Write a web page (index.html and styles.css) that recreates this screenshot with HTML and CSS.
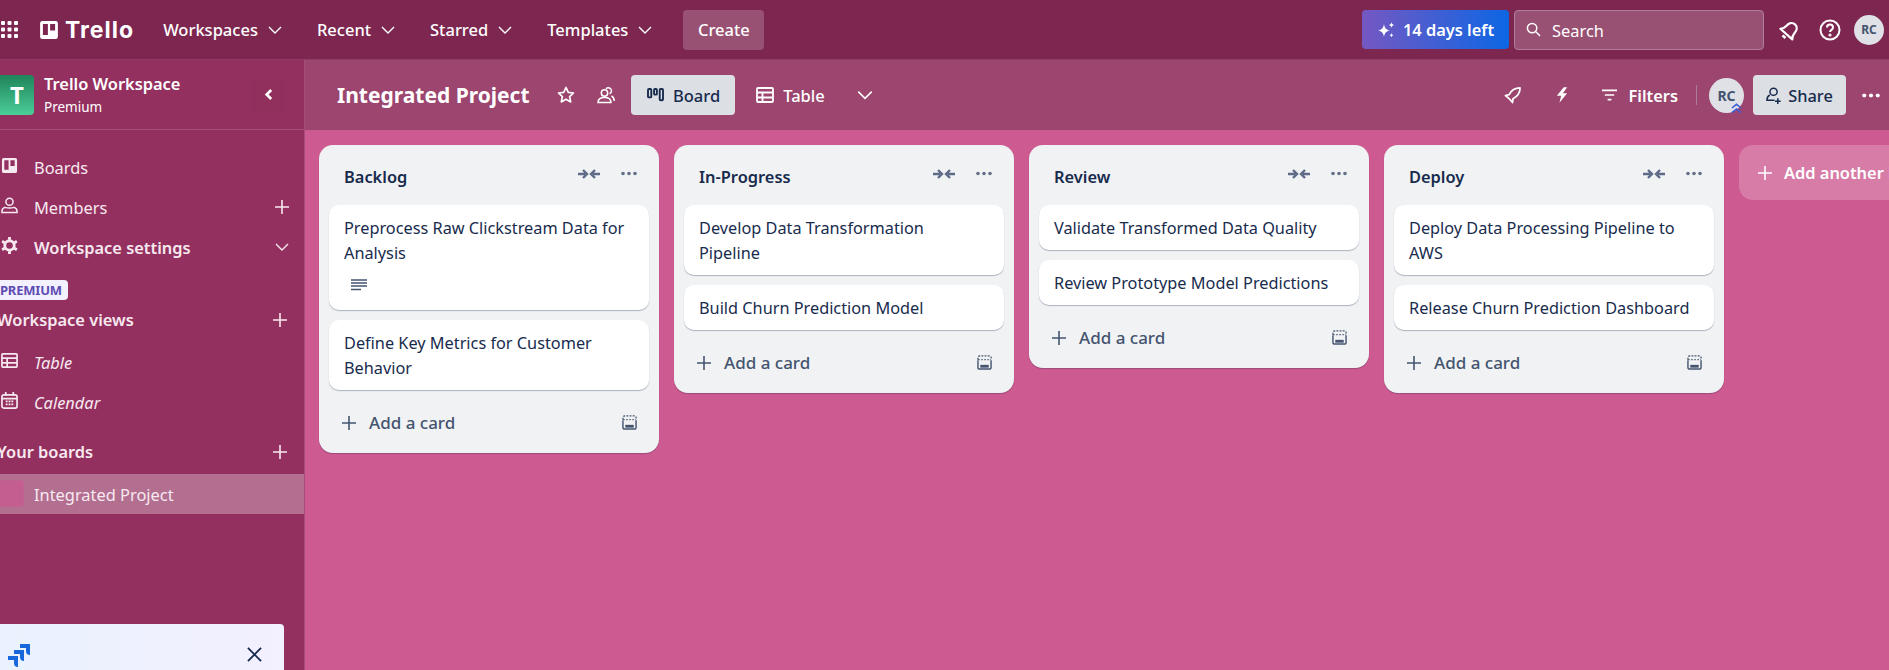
FILE: index.html
```html
<!DOCTYPE html>
<html lang="en">

<head>
    <meta charset="UTF-8">
    <title>Integrated Project | Trello</title>
    <link rel="stylesheet" href="styles.css">
</head>

<body>
    <svg class="defs" width="0" height="0">
        <symbol id="chev" viewBox="0 0 16 16"><path d="M2 5l6 6 6-6" fill="none" stroke="currentColor" stroke-width="1.400"/></symbol>
        <symbol id="plus" viewBox="0 0 16 16"><path d="M8 1v14M1 8h14" fill="none" stroke="currentColor" stroke-width="1.600"/></symbol>
        <symbol id="collapse" viewBox="0 0 22 10"><path d="M0 5h7M5 1l4 4-4 4M22 5h-7M17 1l-4 4 4 4" fill="none" stroke="currentColor" stroke-width="2.400"/></symbol>
        <symbol id="dots" viewBox="0 0 16 4"><circle cx="2" cy="2" r="1.800" fill="currentColor"/><circle cx="8" cy="2" r="1.800" fill="currentColor"/><circle cx="14" cy="2" r="1.800" fill="currentColor"/></symbol>
        <symbol id="template" viewBox="0 0 16 16"><path d="M1 5V3q0-2 2-2h10q2 0 2 2v2" fill="none" stroke="currentColor" stroke-width="1.400" stroke-dasharray="2 1.300"/><path d="M1 5.500V13q0 2 2 2h10q2 0 2-2V5.500" fill="none" stroke="currentColor" stroke-width="1.500"/><path d="M1 5h14" stroke="currentColor" stroke-width="1" stroke-dasharray="2 1.300"/><rect x="3.500" y="10.500" width="9" height="3" fill="currentColor"/></symbol>
        <symbol id="board" viewBox="0 0 18 18"><path fill-rule="evenodd" d="M3 1h12q2 0 2 2v12q0 2-2 2H3q-2 0-2-2V3q0-2 2-2zM3.500 3.500v10h4.500v-10zM10 3.500v6h4.500v-6z" fill="currentColor"/></symbol>
        <symbol id="table" viewBox="0 0 18 16"><path d="M2 1h14q1 0 1 1v12q0 1-1 1H2q-1 0-1-1V2q0-1 1-1zM1 5.500h16M1 10.500h16M6.500 5.500V15" fill="none" stroke="currentColor" stroke-width="1.800"/></symbol>
    </svg>

    <header class="topbar">
        <svg class="apps" viewBox="0 0 17 17" width="17" height="17" fill="#fff">
            <rect width="4" height="4" rx="1"/><rect x="6.500" width="4" height="4" rx="1"/><rect x="13" width="4" height="4" rx="1"/>
            <rect y="6.500" width="4" height="4" rx="1"/><rect x="6.500" y="6.500" width="4" height="4" rx="1"/><rect x="13" y="6.500" width="4" height="4" rx="1"/>
            <rect y="13" width="4" height="4" rx="1"/><rect x="6.500" y="13" width="4" height="4" rx="1"/><rect x="13" y="13" width="4" height="4" rx="1"/>
        </svg>
        <div class="logo">
            <svg viewBox="0 0 18 18" width="20" height="20"><use href="#board"/></svg>
            <span>Trello</span>
        </div>
        <nav class="nav">
            <a class="nav-item">Workspaces <svg><use href="#chev"/></svg></a>
            <a class="nav-item">Recent <svg><use href="#chev"/></svg></a>
            <a class="nav-item">Starred <svg><use href="#chev"/></svg></a>
            <a class="nav-item">Templates <svg><use href="#chev"/></svg></a>
        </nav>
        <button class="create">Create</button>

        <div class="top-right">
            <button class="trial">
                <svg viewBox="0 0 18 18" width="18" height="18" fill="#fff"><path d="M7 3c.6 4 2 5.600 6 6.500-4 .9-5.400 2.500-6 6.500-.6-4-2-5.600-6-6.500 4-.9 5.400-2.500 6-6.500zM14.500 1c.3 1.800 1 2.500 2.500 3-1.500.5-2.200 1.200-2.500 3-.3-1.800-1-2.500-2.500-3 1.500-.5 2.200-1.200 2.500-3zM14.500 12c.2 1.300.7 1.800 2 2.200-1.300.4-1.800.9-2 2.300-.2-1.400-.7-1.900-2-2.300 1.300-.4 1.800-.9 2-2.200z"/></svg>
                14 days left
            </button>
            <div class="search">
                <svg viewBox="0 0 16 16" width="15" height="15" fill="none" stroke="#fff" stroke-width="1.600"><circle cx="6.500" cy="6.500" r="5"/><path d="M10.500 10.500l4.500 4.500"/></svg>
                <span>Search</span>
            </div>
            <svg class="top-icon" viewBox="0 0 24 24" width="24" height="24" fill="none" stroke="#fff" stroke-width="2.200" stroke-linejoin="round"><g transform="rotate(42 12 12)"><path d="M4 17.500c1.500-1.500 2.500-3 2.500-6 0-4 2-7 5.500-7s5.500 3 5.500 7c0 3 1 4.500 2.500 6z"/><path d="M10 21h4" stroke-width="2.600"/></g></svg>
            <svg class="top-icon" viewBox="0 0 22 22" width="22" height="22" fill="none" stroke="#fff" stroke-width="2"><circle cx="11" cy="11" r="9.500"/><path d="M8 8.500c0-4 6-4 6 0 0 2.500-3 2.300-3 4.500"/><circle cx="11" cy="16" r=".6"/></svg>
            <span class="avatar">RC</span>
        </div>
    </header>

    <div class="main">
        <aside class="sidebar">
            <div class="side-head">
                <span class="ws-badge">T</span>
                <div class="ws-name">
                    <b>Trello Workspace</b>
                    <small>Premium</small>
                </div>
                <span class="side-collapse">
                    <svg viewBox="0 0 10 14" width="9" height="13" fill="none" stroke="#fff" stroke-width="3"><path d="M8 2L3 7l5 5"/></svg>
                </span>
            </div>

            <ul class="side-list">
                <li class="side-row">
                    <svg class="side-icon" viewBox="0 0 18 18"><use href="#board"/></svg>
                    <span>Boards</span>
                </li>
                <li class="side-row">
                    <svg class="side-icon" viewBox="0 0 18 18" fill="none" stroke="currentColor" stroke-width="1.600"><circle cx="9" cy="5" r="3.800"/><path d="M4 11q-3 1-3 4v1.500h16V15q0-3-3-4-5 1.500-10 0z"/></svg>
                    <span>Members</span>
                    <svg class="side-plus"><use href="#plus"/></svg>
                </li>
                <li class="side-row strong">
                    <svg class="side-icon" viewBox="0 0 18 18" fill="none" stroke="currentColor"><circle cx="9" cy="9" r="5" stroke-width="3"/><path d="M9 0v3M9 15v3M1.200 4.500l2.600 1.500M14.200 12l2.600 1.500M1.200 13.500L3.800 12M14.200 6l2.600-1.500" stroke-width="3"/></svg>
                    <span>Workspace settings</span>
                    <svg class="side-chev"><use href="#chev"/></svg>
                </li>
            </ul>

            <div class="premium">PREMIUM</div>
            <div class="side-title first">
                <span>Workspace views</span>
                <svg><use href="#plus"/></svg>
            </div>
            <ul class="side-list">
                <li class="side-row view">
                    <svg class="side-icon" viewBox="0 0 18 16"><use href="#table"/></svg>
                    <span>Table</span>
                </li>
                <li class="side-row view">
                    <svg class="side-icon" viewBox="0 0 18 18" fill="none" stroke="currentColor" stroke-width="1.800"><rect x="1" y="3" width="16" height="14" rx="2"/><path d="M1 7h16M5 0v4M13 0v4M5 10h2M8 10h2M11 10h2M5 13h2M8 13h2M11 13h2"/></svg>
                    <span>Calendar</span>
                </li>
            </ul>

            <div class="side-title boards">
                <span>Your boards</span>
                <svg><use href="#plus"/></svg>
            </div>
            <div class="side-row current">
                <span class="thumb"></span>
                <span>Integrated Project</span>
            </div>

            <div class="promo">
                <svg class="jira" viewBox="0 0 24 24" width="24" height="24" fill="#1868db"><path d="M13 1h10v11q-4 0-4-4V5h-6zM7 7h10v11q-4 0-4-4v-3H7zM1 13h10v11q-4 0-4-4v-3H1z"/></svg>
                <svg class="promo-x" viewBox="0 0 16 16" width="15" height="15" fill="none" stroke="#172b4d" stroke-width="2"><path d="M1 1l14 14M15 1L1 15"/></svg>
            </div>
        </aside>

        <section class="board">
            <div class="board-bar">
                <h1>Integrated Project</h1>
                <svg class="bar-icon star" viewBox="0 0 18 18" width="18" height="18" fill="none" stroke="#fff" stroke-width="1.700" stroke-linejoin="round"><path d="M9 1.500l2.300 4.900 5.200.6-3.900 3.600 1.100 5.300L9 13.200l-4.700 2.700 1.100-5.300L1.500 7l5.200-.6z"/></svg>
                <svg class="bar-icon people" viewBox="0 0 18 18" width="18" height="18" fill="none" stroke="#fff" stroke-width="1.500"><circle cx="7.500" cy="7" r="3.200"/><path d="M1 16.500c0-3 2.500-5 6.500-5s6.500 2 6.500 5zM9 2.800a3.200 3.200 0 0 1 5.500 2.200 3 3 0 0 1-2 2.800M14.500 10c1.800 1 2.700 3 2.700 5"/></svg>
                <button class="view-btn active">
                    <svg viewBox="0 0 18 16" width="17" height="15" fill="none" stroke="currentColor" stroke-width="2"><rect x="1" y="1" width="3.500" height="9" rx="1"/><rect x="7.500" y="1" width="3" height="6" rx="1"/><rect x="13.500" y="1" width="3.500" height="12" rx="1"/></svg>
                    Board
                </button>
                <button class="view-btn">
                    <svg viewBox="0 0 18 16" width="18" height="16"><use href="#table"/></svg>
                    Table
                </button>
                <svg class="bar-chev"><use href="#chev"/></svg>

                <div class="bar-right">
                    <svg class="bar-tool" viewBox="0 0 18 18" width="17" height="17" fill="none" stroke="#fff" stroke-width="1.800" stroke-linejoin="round"><path d="M17 1c-5 0-9 2-11.500 7L1.500 9l3 2.500 2.500 2.500 2 2.500.5-4C14 10 17 6 17 1z"/></svg>
                    <svg class="bar-tool bolt" viewBox="0 0 14 18" width="12" height="16" fill="#fff"><path d="M9 0L1 10h5l-2 8 9-11H8l5-7z"/></svg>
                    <div class="filters">
                        <svg viewBox="0 0 16 12" width="15" height="12" fill="none" stroke="#fff" stroke-width="1.800"><path d="M0 1h16M3 6h10M6 11h4"/></svg>
                        <span>Filters</span>
                    </div>
                    <span class="bar-sep"></span>
                    <span class="avatar big">RC
                        <svg class="chevs" viewBox="0 0 12 12" width="11" height="12" fill="none" stroke="#3d5bd8" stroke-width="1.700"><path d="M1 6l5-4 5 4M1 11l5-4 5 4"/></svg>
                    </span>
                    <button class="share">
                        <svg viewBox="0 0 18 18" width="17" height="17" fill="none" stroke="#172b4d" stroke-width="1.600"><circle cx="8" cy="5" r="3.800"/><path d="M9 14H1c0-3 1-4.500 3-5.500M12.500 12v6M9.500 15h6"/></svg>
                        Share
                    </button>
                    <svg class="bar-dots" viewBox="0 0 16 4"><use href="#dots"/></svg>
                </div>
            </div>

            <div class="lists">
                <div class="list">
                    <div class="list-head">
                        <h2>Backlog</h2>
                        <svg class="ico-collapse"><use href="#collapse"/></svg>
                        <svg class="ico-dots"><use href="#dots"/></svg>
                    </div>
                    <div class="card">
                        Preprocess Raw Clickstream Data for Analysis
                        <svg class="desc" viewBox="0 0 16 12" width="16" height="12" fill="none" stroke="#44546f" stroke-width="1.400"><path d="M0 1h16M0 4h16M0 7h16M0 10.500h10"/></svg>
                    </div>
                    <div class="card">Define Key Metrics for Customer Behavior</div>
                    <div class="list-foot">
                        <svg class="foot-plus"><use href="#plus"/></svg>
                        <span>Add a card</span>
                        <svg class="foot-tpl"><use href="#template"/></svg>
                    </div>
                </div>

                <div class="list">
                    <div class="list-head">
                        <h2>In-Progress</h2>
                        <svg class="ico-collapse"><use href="#collapse"/></svg>
                        <svg class="ico-dots"><use href="#dots"/></svg>
                    </div>
                    <div class="card">Develop Data Transformation Pipeline</div>
                    <div class="card">Build Churn Prediction Model</div>
                    <div class="list-foot">
                        <svg class="foot-plus"><use href="#plus"/></svg>
                        <span>Add a card</span>
                        <svg class="foot-tpl"><use href="#template"/></svg>
                    </div>
                </div>

                <div class="list">
                    <div class="list-head">
                        <h2>Review</h2>
                        <svg class="ico-collapse"><use href="#collapse"/></svg>
                        <svg class="ico-dots"><use href="#dots"/></svg>
                    </div>
                    <div class="card">Validate Transformed Data Quality</div>
                    <div class="card">Review Prototype Model Predictions</div>
                    <div class="list-foot">
                        <svg class="foot-plus"><use href="#plus"/></svg>
                        <span>Add a card</span>
                        <svg class="foot-tpl"><use href="#template"/></svg>
                    </div>
                </div>

                <div class="list">
                    <div class="list-head">
                        <h2>Deploy</h2>
                        <svg class="ico-collapse"><use href="#collapse"/></svg>
                        <svg class="ico-dots"><use href="#dots"/></svg>
                    </div>
                    <div class="card">Deploy Data Processing Pipeline to AWS</div>
                    <div class="card">Release Churn Prediction Dashboard</div>
                    <div class="list-foot">
                        <svg class="foot-plus"><use href="#plus"/></svg>
                        <span>Add a card</span>
                        <svg class="foot-tpl"><use href="#template"/></svg>
                    </div>
                </div>

                <button class="add-list">
                    <svg><use href="#plus"/></svg>
                    Add another list
                </button>
            </div>
        </section>
    </div>
</body>

</html>
```

FILE: styles.css
```css
* {
    margin: 0;
    padding: 0;
    box-sizing: border-box;
}

body {
    width: 1889px;
    height: 670px;
    overflow: hidden;
    display: flex;
    flex-direction: column;
    background: #cd5a91;
    color: #fff;
    font-family: "Noto Sans", "Open Sans", sans-serif;
    font-size: 16.4px;
}

button {
    border: 0;
    font: inherit;
}

ul {
    list-style: none;
}

.defs {
    position: absolute;
}

/* Top bar */
.topbar {
    height: 60px;
    flex: none;
    display: flex;
    align-items: center;
    padding-left: 1px;
    background: #7d2650;
    border-bottom: 1px solid #8f3c64;
}

.logo {
    display: flex;
    align-items: center;
    gap: 6px;
    margin-left: 21px;
    font-family: "Inter", sans-serif;
    font-size: 23px;
    font-weight: 700;
    letter-spacing: 1px;
}

.logo svg {
    fill: #fff;
}

.nav {
    display: flex;
    margin-left: 29px;
}

.nav-item {
    display: flex;
    align-items: center;
    gap: 9px;
    font-size: 16.500px;
    font-weight: 500;
    margin-right: 34px;
}

.nav-item:last-child {
    margin-right: 30px;
}

.nav-item svg {
    width: 16px;
    height: 16px;
}

.create {
    width: 81px;
    height: 40px;
    border-radius: 4px;
    background: #985173;
    color: #fff;
    font-size: 16.500px;
    font-weight: 500;
}

.top-right {
    margin-left: auto;
    display: flex;
    align-items: center;
}

.trial {
    width: 147px;
    height: 39px;
    display: flex;
    align-items: center;
    justify-content: center;
    gap: 8px;
    border-radius: 4px;
    background: linear-gradient(90deg, #7558c2, #0c66e4);
    color: #fff;
    font-weight: 600;
}

.search {
    width: 250px;
    height: 40px;
    margin-left: 5px;
    display: flex;
    align-items: center;
    gap: 11px;
    padding-left: 11px;
    border: 1px solid #b07d96;
    border-radius: 4px;
    background: #985173;
}

.search span {
    padding-top: 2px;
}

.top-icon {
    margin-left: 14px;
}

.top-icon + .top-icon {
    margin-left: 17px;
}

.avatar {
    width: 30px;
    height: 30px;
    margin: 0 5px 0 13px;
    display: flex;
    align-items: center;
    justify-content: center;
    border-radius: 50%;
    background: #dfe1e6;
    color: #44546f;
    font-size: 12px;
    font-weight: 700;
}

/* Main area */
.main {
    flex: 1;
    display: grid;
    grid-template-columns: 305px 1fr;
    min-height: 0;
}

.sidebar {
    display: flex;
    flex-direction: column;
    position: relative;
    background: #94305f;
    border-right: 1px solid #a64d78;
    overflow: hidden;
}

.side-head {
    height: 70px;
    flex: none;
    display: flex;
    align-items: center;
    border-bottom: 1px solid #a64d78;
}

.ws-badge {
    width: 34px;
    height: 40px;
    display: flex;
    align-items: center;
    justify-content: center;
    border-radius: 0 4px 4px 0;
    background: linear-gradient(180deg, #1f845a, #4bce97);
    font-size: 24px;
    font-weight: 700;
}

.ws-name {
    display: flex;
    flex-direction: column;
    margin-left: 10px;
}

.ws-name b {
    font-size: 16.400px;
    font-weight: 600;
    line-height: 24px;
}

.ws-name small {
    font-size: 13.500px;
    line-height: 22px;
}

.side-collapse {
    width: 34px;
    height: 34px;
    margin-left: auto;
    margin-right: 19px;
    display: flex;
    align-items: center;
    justify-content: center;
    border-radius: 4px;
    background: #912f5d;
}

.side-list {
    display: flex;
    flex-direction: column;
}

.side-head + .side-list {
    margin-top: 17px;
}

.side-row {
    height: 40px;
    display: flex;
    align-items: center;
    padding-left: 34px;
    position: relative;
    color: #f7e9f0;
}

.side-row.strong {
    font-weight: 600;
}

.side-row.view {
    font-style: italic;
}

.side-icon {
    position: absolute;
    left: 1px;
    top: 10px;
    width: 17px;
    height: 17px;
}

.side-plus,
.side-chev,
.side-title svg {
    width: 16px;
    height: 16px;
}

.side-plus,
.side-chev {
    margin-left: auto;
    margin-right: 14px;
}

.premium {
    width: 68px;
    height: 20px;
    margin-top: 13px;
    display: flex;
    align-items: center;
    border-radius: 0 4px 4px 0;
    background: #f3f0ff;
    color: #5e4db2;
    font-size: 13px;
    font-weight: 700;
    letter-spacing: -0.2px;
}

.side-title {
    height: 40px;
    display: flex;
    align-items: center;
    justify-content: space-between;
    margin-left: -3px;
    padding-right: 16px;
    padding-bottom: 1px;
    font-weight: 600;
    color: #f7e9f0;
}

.side-title.first + .side-list {
    margin-top: 2px;
}

.side-title.boards {
    margin-top: 10px;
    margin-bottom: 2px;
}

.side-row.current {
    background: #b36f90;
    flex: none;
}

.thumb {
    position: absolute;
    left: -4px;
    top: 6px;
    width: 28px;
    height: 27px;
    border-radius: 3px;
    background: #c55e90;
    border: 1px solid #c0648f;
}

.promo {
    position: absolute;
    left: -8px;
    right: 20px;
    top: 564px;
    height: 60px;
    border-radius: 4px;
    background: linear-gradient(90deg, #e9f2fe, #f3f0ff);
}

.jira {
    position: absolute;
    left: 15px;
    top: 19px;
}

.promo-x {
    position: absolute;
    right: 22px;
    top: 23px;
}

/* Board */
.board {
    display: flex;
    flex-direction: column;
    min-width: 0;
}

.board-bar {
    height: 70px;
    flex: none;
    display: flex;
    align-items: center;
    padding-left: 32px;
    background: #9c456e;
}

.board-bar h1 {
    font-size: 21px;
    font-weight: 700;
    width: 192px;
    white-space: nowrap;
}

.bar-icon.star {
    margin-left: 28px;
}

.bar-icon.people {
    margin-left: 22px;
}

.view-btn {
    height: 40px;
    display: flex;
    align-items: center;
    gap: 9px;
    margin-left: 16px;
    padding: 0 15px 0 16px;
    border-radius: 4px;
    background: transparent;
    color: #fff;
    font-size: 16.500px;
    font-weight: 500;
}

.view-btn.active {
    background: #dcdfe4;
    color: #172b4d;
}

.view-btn + .view-btn {
    margin-left: 5px;
}

.bar-chev {
    width: 18px;
    height: 18px;
    margin-left: 16px;
}

.bar-right {
    margin-left: auto;
    display: flex;
    align-items: center;
}

.bar-tool.bolt {
    margin-left: 35px;
}

.filters {
    display: flex;
    align-items: center;
    gap: 11px;
    margin-left: 34px;
    font-weight: 600;
}

.bar-sep {
    width: 1px;
    height: 20px;
    margin-left: 18px;
    background: #b07d96;
}

.avatar.big {
    width: 35px;
    height: 35px;
    margin: 0 9px 0 12px;
    position: relative;
    font-size: 14px;
}

.chevs {
    position: absolute;
    right: 2px;
    bottom: -1px;
}

.share {
    width: 93px;
    height: 40px;
    display: flex;
    align-items: center;
    justify-content: center;
    gap: 5px;
    border-radius: 4px;
    background: #dcdfe4;
    color: #172b4d;
    font-weight: 500;
}

.bar-dots {
    width: 18px;
    height: 5px;
    margin: 0 9px 0 16px;
    color: #fff;
}

/* Lists */
.lists {
    flex: 1;
    display: flex;
    align-items: flex-start;
    gap: 15px;
    padding: 15px 0 0 14px;
    overflow: hidden;
}

.list {
    width: 340px;
    flex: none;
    display: flex;
    flex-direction: column;
    padding: 0 10px;
    border-radius: 14px;
    background: #f1f2f4;
    color: #172b4d;
    box-shadow: 0 1px 1px rgba(9, 30, 66, 0.25);
}

.list-head {
    height: 60px;
    display: flex;
    align-items: center;
    padding-left: 15px;
    padding-top: 2px;
}

.list-head h2 {
    flex: 1;
    font-size: 16.400px;
    font-weight: 600;
}

.ico-collapse {
    width: 22px;
    height: 10px;
    margin-top: -5px;
    color: #5d6b88;
}

.ico-dots {
    width: 16px;
    height: 5px;
    margin: -5px 12px 0 21px;
    color: #626f86;
}

.card {
    margin-bottom: 10px;
    padding: 11px 20px 9px 15px;
    border-radius: 10px;
    background: #fff;
    box-shadow: 0 1px 1px rgba(9, 30, 66, 0.3);
    font-size: 16.300px;
    line-height: 25px;
}

.desc {
    display: block;
    margin: 13px 0 10px 7px;
}

.list-foot {
    height: 63px;
    margin-top: -10px;
    padding-top: 2px;
    display: flex;
    align-items: center;
    padding-left: 12px;
    color: #44546f;
    font-size: 17px;
    font-weight: 500;
}

.list-foot span {
    flex: 1;
    margin-left: 12px;
}

.foot-plus {
    width: 16px;
    height: 16px;
}

.foot-tpl {
    width: 15px;
    height: 15px;
    margin-right: 12px;
}

.add-list {
    width: 340px;
    height: 55px;
    flex: none;
    display: flex;
    align-items: center;
    gap: 11px;
    padding-left: 18px;
    border-radius: 14px;
    background: rgba(255, 255, 255, 0.2);
    color: #fff;
    font-weight: 600;
    white-space: nowrap;
}

.add-list svg {
    width: 16px;
    height: 16px;
}
```
